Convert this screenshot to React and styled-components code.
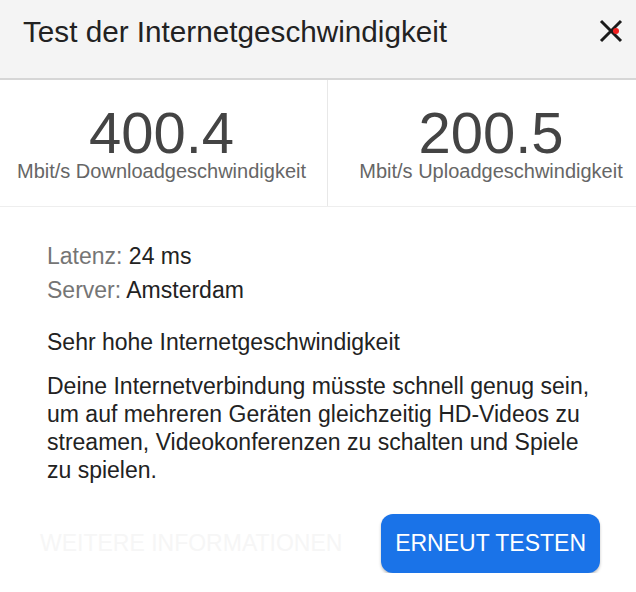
import React from 'react'
import styled, { createGlobalStyle } from 'styled-components'

const GlobalStyle = createGlobalStyle`
  body {
    margin: 0;
    background: #fff;
    font-family: 'Liberation Sans', Arial, sans-serif;
    overflow: hidden;
  }
`

const Dialog = styled.div`
  width: 654px;
  background: #fff;
`

const Header = styled.header`
  display: flex;
  align-items: flex-start;
  justify-content: space-between;
  height: 80px;
  padding: 14px 13px 0 23px;
  box-sizing: border-box;
  width: 636px;
  background: #f4f4f4;
  border-bottom: 2px solid #d6d6d6;
`

const Title = styled.h1`
  margin: 0;
  font-size: 29.7px;
  line-height: 36px;
  font-weight: 400;
  color: #222;
`

const CloseButton = styled.button`
  position: relative;
  width: 24px;
  height: 24px;
  margin-top: 5px;
  padding: 0;
  border: 0;
  background: none;
  display: flex;
  align-items: center;
  justify-content: center;
`

const Dot = styled.span`
  position: absolute;
  left: 14px;
  top: 9px;
  width: 6px;
  height: 6px;
  border-radius: 50%;
  background: #f01e1e;
`

const Stats = styled.div`
  display: grid;
  grid-template-columns: 327px 327px;
  height: 127px;
  box-sizing: border-box;
  border-bottom: 1px solid #eee;
`

const Stat = styled.div`
  display: flex;
  flex-direction: column;
  align-items: center;
  padding-top: 25px;
  padding-right: ${(p) => (p.$divider ? '0' : '4px')};
  border-left: ${(p) => (p.$divider ? '1px solid #e8e8e8' : 'none')};
`

const Value = styled.div`
  font-size: 58px;
  line-height: 56px;
  color: #444;
`

const Unit = styled.div`
  font-size: 20px;
  line-height: 20px;
  color: #666;
`

const Body = styled.div`
  padding: 32px 40px 0 47px;
  width: 636px;
  box-sizing: border-box;
`

const InfoLine = styled.div`
  font-size: 23px;
  line-height: 34px;
  color: #222;
  span {
    color: #757575;
  }
`

const Headline = styled.p`
  margin: 21px 0 0;
  font-size: 23px;
  line-height: 28px;
  color: #222;
`

const Text = styled.p`
  margin: 16px 0 0;
  font-size: 23px;
  line-height: 28px;
  color: #222;
`

const Actions = styled.div`
  display: flex;
  align-items: center;
  justify-content: space-between;
  width: 636px;
  box-sizing: border-box;
  padding: 30px 36px 0 40px;
`

const TextButton = styled.button`
  border: 0;
  background: none;
  padding: 0;
  font-family: inherit;
  font-size: 23px;
  color: #f6f6f6;
  text-transform: uppercase;
`

const PrimaryButton = styled.button`
  height: 59px;
  padding: 0 14px;
  border: 0;
  border-radius: 12px;
  background: #1a73e8;
  color: #fff;
  font-family: inherit;
  font-size: 23px;
  text-transform: uppercase;
  box-shadow: 0 2px 3px rgba(0, 0, 0, 0.25);
`

export default function App() {
  return (
    <>
      <GlobalStyle />
      <Dialog>
        <Header>
          <Title>Test der Internetgeschwindigkeit</Title>
          <CloseButton aria-label='Schließen'>
            <svg width='24' height='24' viewBox='0 0 24 24'>
              <path d='M2 2 L22 22 M22 2 L2 22' stroke='#1b1b1b' strokeWidth='3' />
            </svg>
            <Dot />
          </CloseButton>
        </Header>

        <Stats>
          <Stat>
            <Value>400.4</Value>
            <Unit>Mbit/s Downloadgeschwindigkeit</Unit>
          </Stat>
          <Stat $divider>
            <Value>200.5</Value>
            <Unit>Mbit/s Uploadgeschwindigkeit</Unit>
          </Stat>
        </Stats>

        <Body>
          <InfoLine><span>Latenz:</span> 24 ms</InfoLine>
          <InfoLine><span>Server:</span> Amsterdam</InfoLine>
          <Headline>Sehr hohe Internetgeschwindigkeit</Headline>
          <Text>
            Deine Internetverbindung müsste schnell genug sein, um auf mehreren Geräten gleichzeitig HD-Videos zu
            streamen, Videokonferenzen zu schalten und Spiele zu spielen.
          </Text>
        </Body>

        <Actions>
          <TextButton>Weitere Informationen</TextButton>
          <PrimaryButton>Erneut testen</PrimaryButton>
        </Actions>
      </Dialog>
    </>
  )
}
